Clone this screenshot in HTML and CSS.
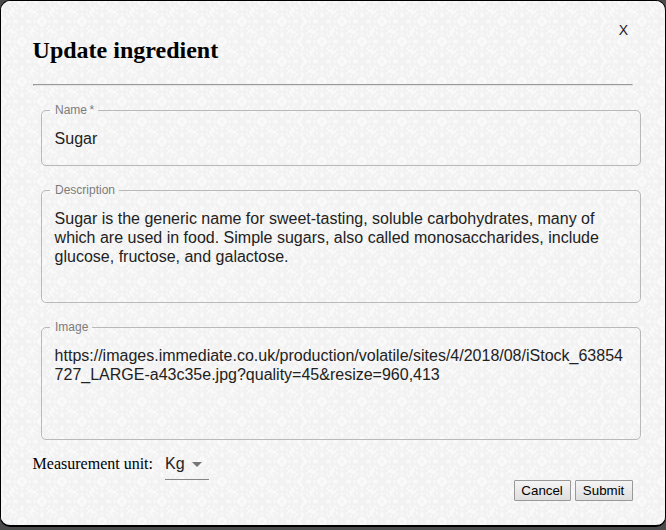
FILE: index.html
```html
<!DOCTYPE html>
<html lang="en">
<head>
<meta charset="utf-8">
<title>Update ingredient</title>
<link rel="stylesheet" href="styles.css">
</head>
<body>
<main class="dialog">
  <svg class="texture" aria-hidden="true">
    <defs>
      <g id="flower" fill="#fafafa">
        <g id="quarter">
          <path d="M-1.5-5h3l1 1.5v2h-5v-2zM-.5-9h1v1h1v1h-1v1h-1v-1h-1v-1h1z"/>
          <path d="M-1-16h2l1 2-1 3h-2l-1-3z"/>
          <path d="M4-8h2v2h-2zM6-6h2v2h-2zM7-11l3 1v2h-2zM8-8h3v2h-3zM11-12l2 1-1 2h-2zM4-13l2 1v2l-2-1zM11-6l2 1v1h-2z"/>
        </g>
        <use href="#quarter" transform="rotate(90)"/>
        <use href="#quarter" transform="rotate(180)"/>
        <use href="#quarter" transform="rotate(270)"/>
      </g>
      <pattern id="floral" width="40" height="40" patternUnits="userSpaceOnUse" y="0.5">
        <use href="#flower"/>
        <use href="#flower" x="40"/>
        <use href="#flower" y="40"/>
        <use href="#flower" x="40" y="40"/>
        <use href="#flower" x="20" y="20"/>
      </pattern>
      <rect id="panel" width="300" height="550" fill="url(#floral)"/>
    </defs>
    <g transform="translate(1 -20)">
      <use href="#panel" transform="translate(-300 0)"/>
      <use href="#panel"/>
      <use href="#panel" transform="translate(300 0)"/>
      <use href="#panel" transform="translate(600 0)"/>
    </g>
  </svg>
  <div class="content">
    <header class="header">
      <h2>Update ingredient</h2>
      <button class="close" type="button">X</button>
    </header>
    <hr>
    <form class="form">
      <fieldset class="field name"><legend>Name&thinsp;*</legend><div>Sugar</div></fieldset>
      <fieldset class="field area"><legend>Description</legend><div>Sugar is the generic name for sweet-tasting, soluble carbohydrates, many of which are used in food. Simple sugars, also called monosaccharides, include glucose, fructose, and galactose.</div></fieldset>
      <fieldset class="field area"><legend>Image</legend><div class="url">https://images.immediate.co.uk/production/volatile/sites/4/2018/08/iStock_63854727_LARGE-a43c35e.jpg?quality=45&amp;resize=960,413</div></fieldset>
      <div class="unit">
        <span>Measurement unit:</span>
        <div class="select">Kg<svg width="10" height="5" viewBox="0 0 10 5"><path d="M0 0h10L5 5z" fill="#757575"/></svg></div>
      </div>
      <div class="actions"><button type="button">Cancel</button><button type="button">Submit</button></div>
    </form>
  </div>
</main>
</body>
</html>
```
FILE: styles.css
```css
* { box-sizing: border-box; }
body {
  margin: 0;
  height: 530px;
  overflow: hidden;
  background: #4b4b4d;
  font: 16px "Liberation Serif", serif;
  color: #000;
}
.dialog {
  position: relative;
  height: 527px;
  border: 1px solid #000;
  border-bottom-width: 2px;
  border-radius: 10px;
  background: #f2f2f2;
  overflow: hidden;
}
.texture { position: absolute; inset: 0; width: 100%; height: 100%; }
.content { position: relative; padding: 0 31.6px; }
.header { display: flex; justify-content: space-between; height: 83px; }
h2 { margin: 35px 0 0; font-size: 24px; line-height: 28px; }
.close {
  margin: 20px 5px 0 0;
  padding: 0;
  width: 10px;
  height: 18px;
  border: 0;
  background: none;
  font: 14px/18px "Liberation Sans", sans-serif;
  color: #222;
}
hr {
  width: 600px;
  height: 2px;
  margin: 0;
  border: 1px solid;
  border-color: #9a9a9a #e4e4e4 #e4e4e4 #9a9a9a;
}
.form { display: flex; flex-direction: column; padding-top: 17px; }
.field {
  width: 600px;
  margin: 0 0 17px 8px;
  padding: 0 13px;
  border: 1px solid #b9b9b9;
  border-radius: 5px;
  font: 16px/19px "Liberation Sans", sans-serif;
  color: #222;
}
.field legend {
  margin-left: -4.6px;
  padding: 0 3.6px 0 5px;
  height: 14px;
  font-size: 12px;
  line-height: 14px;
  color: #7c7c7c;
}
.name { height: 63px; }
.area { height: 120px; }
.field div { padding-top: 12px; }
.url { word-break: break-all; }
.unit {
  display: flex;
  align-items: flex-start;
  gap: 12px;
  height: 37px;
  margin-top: -14px;
  line-height: 18px;
}
.unit span { padding-top: 12px; }
.select {
  display: flex;
  align-items: center;
  gap: 7px;
  width: 44px;
  height: 37px;
  padding-top: 5px;
  border-bottom: 1px solid #858585;
  font: 16px/19px "Liberation Sans", sans-serif;
  color: #222;
}
.select svg { margin-top: 1px; }
.actions { display: flex; gap: 4px; margin-left: 481px; }
.actions button {
  width: 57px;
  height: 21px;
  padding: 0;
  border: 1px solid #999;
  border-radius: 1px;
  background: linear-gradient(#f5f5f5, #dedede);
  font: 13.333px/17px "Liberation Sans", sans-serif;
  color: #000;
}
.actions button:last-child { width: 58px; }
```
